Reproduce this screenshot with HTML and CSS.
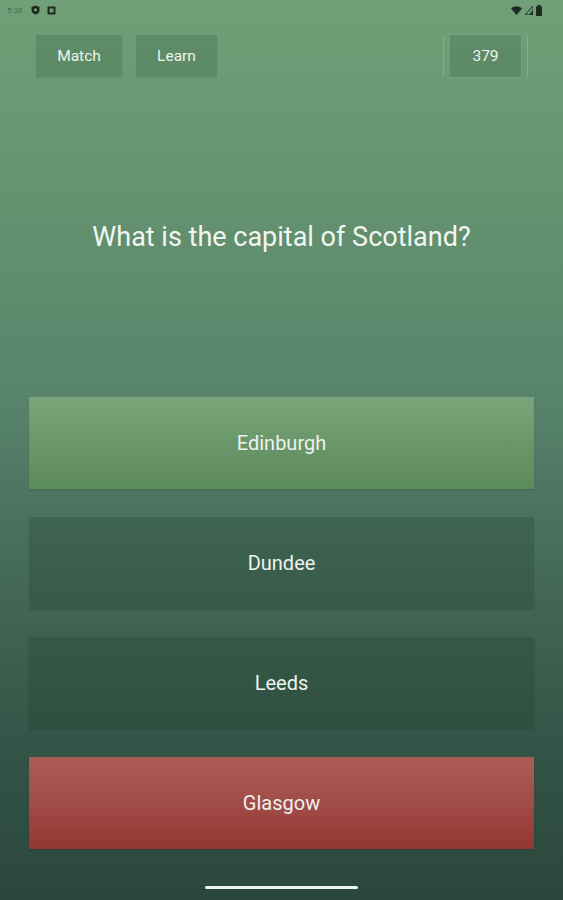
FILE: index.html
```html
<!DOCTYPE html>
<html>
<head>
<meta charset="utf-8">
<link rel="stylesheet" href="styles.css">
</head>
<body>
<div class="page">
  <div class="status">
    <div class="status-left">
      <span class="time">5:38</span>
      <svg class="sicon" width="9" height="10" viewBox="0 0 9 10"><path d="M4.5 0.5 L8.5 2 V5 C8.5 7.5 6.5 9 4.5 9.5 C2.5 9 0.5 7.5 0.5 5 V2 Z" fill="#1e2a22"/><circle cx="4.5" cy="4.8" r="1.6" fill="#6f9f75"/></svg>
      <svg class="sicon" width="9" height="9" viewBox="0 0 9 9"><rect x="0.5" y="0.5" width="8" height="8" rx="1" fill="#1e2a22"/><rect x="2.5" y="2.5" width="4" height="4" fill="#6f9f75"/></svg>
    </div>
    <div class="status-right">
      <svg width="11" height="9" viewBox="0 0 11 9"><path d="M0 2.5 C3 -0.5 8 -0.5 11 2.5 L5.5 9 Z" fill="#1e2a22"/></svg>
      <svg width="8" height="9" viewBox="0 0 8 9"><path d="M8 0 V9 H0 Z" fill="none" stroke="#1e2a22" stroke-width="1"/><path d="M8 4 V9 H4 Z" fill="#1e2a22"/></svg>
      <svg width="6" height="11" viewBox="0 0 6 11"><rect x="1.5" y="0" width="3" height="1.5" fill="#1e2a22"/><rect x="0" y="1.2" width="6" height="9.8" rx="0.8" fill="#1e2a22"/></svg>
    </div>
  </div>
  <div class="topbar">
    <div class="tabs">
      <div class="tab">Match</div>
      <div class="tab">Learn</div>
    </div>
    <div class="score-wrap">
      <div class="score">379</div>
    </div>
  </div>
  <div class="question">What is the capital of Scotland?</div>
  <div class="answers">
    <div class="answer correct">Edinburgh</div>
    <div class="answer neutral">Dundee</div>
    <div class="answer neutral">Leeds</div>
    <div class="answer wrong">Glasgow</div>
  </div>
  <div class="footer">
    <div class="home"></div>
  </div>
</div>
</body>
</html>
```

FILE: styles.css
```css
* { box-sizing: border-box; }
html, body {
  margin: 0;
  padding: 0;
}
body {
  font-family: Roboto, "Liberation Sans", sans-serif;
  background: linear-gradient(180deg, #70a077 0%, #659470 20%, #57836b 45%, #436858 65%, #345547 82%, #2b473d 100%);
  width: 563px;
  height: 900px;
  overflow: hidden;
}
.page {
  height: 900px;
  display: flex;
  flex-direction: column;
}
.status {
  height: 24px;
  display: flex;
  justify-content: space-between;
  align-items: center;
  padding: 0 21px 4px 7px;
}
.status-left, .status-right {
  display: flex;
  align-items: center;
  gap: 7px;
}
.status-right { gap: 3px; }
.time {
  font-size: 8px;
  color: rgba(40, 60, 45, 0.55);
  margin-right: 2px;
}
.topbar {
  margin-top: 11px;
  height: 42px;
  display: flex;
  justify-content: space-between;
  padding: 0 35px 0 36px;
}
.tabs {
  display: flex;
  gap: 14px;
}
.tab {
  height: 42px;
  width: 86px;
  display: flex;
  align-items: center;
  justify-content: center;
  font-size: 15.5px;
  color: #eef4ee;
  background: rgba(40, 80, 50, 0.22);
  box-shadow: 0 1px 2px rgba(0, 0, 0, 0.08);
}
.tab + .tab { width: 81px; }
.score-wrap {
  display: flex;
  padding: 0 6px;
  border-left: 1px solid rgba(200, 230, 200, 0.25);
  border-right: 1px solid rgba(200, 230, 200, 0.25);
}
.score {
  width: 71px;
  height: 42px;
  display: flex;
  align-items: center;
  justify-content: center;
  font-size: 15.5px;
  color: #eef4ee;
  background: rgba(40, 80, 50, 0.22);
  box-shadow: 0 0 0 1px rgba(200, 230, 200, 0.08);
}
.question {
  flex: 1;
  display: flex;
  align-items: center;
  justify-content: center;
  font-size: 27px;
  color: #f2f6f2;
}
.answers {
  display: flex;
  flex-direction: column;
  gap: 28px;
  padding: 0 29px;
}
.answer {
  height: 92px;
  display: flex;
  align-items: center;
  justify-content: center;
  font-size: 20px;
  color: #eef2ee;
  box-shadow: 0 1px 2px rgba(0, 0, 0, 0.12);
}
.correct {
  background: linear-gradient(180deg, #7aa57a 0%, #6a9769 50%, #5b8a5b 100%);
}
.neutral {
  background: rgba(30, 60, 45, 0.26);
}
.wrong {
  background: linear-gradient(180deg, #ac5c55 0%, #a14c47 50%, #933733 100%);
}
.footer {
  height: 51px;
  display: flex;
  justify-content: center;
  padding-top: 37px;
}
.home {
  width: 153px;
  height: 3px;
  border-radius: 2px;
  background: #eef2ee;
}
```
